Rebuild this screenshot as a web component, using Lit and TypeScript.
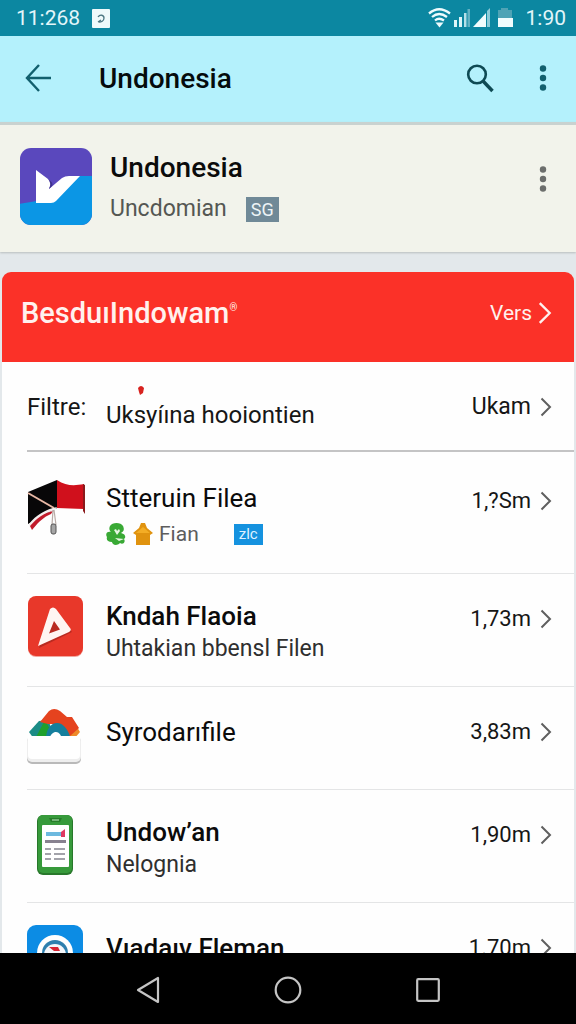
import { LitElement, html, css, nothing } from "lit";
import type { TemplateResult } from "lit";
import { customElement } from "lit/decorators.js";
import { classMap } from "lit/directives/class-map.js";

interface Entry {
  name: string;
  strong: boolean;
  detail?: string;
  tagged?: boolean;
  size: string;
  icon: TemplateResult;
}

const dots = html`<svg width="10" height="30" viewBox="0 0 10 30" aria-hidden="true">
  <circle cx="5" cy="5.500" r="3.200" /><circle cx="5" cy="15" r="3.200" /><circle cx="5" cy="24.500" r="3.200" />
</svg>`;

const chevron = html`<svg class="chevron" width="12" height="20" viewBox="0 0 12 20" aria-hidden="true">
  <path d="M1.5 1.5 10 10 1.5 18.5" fill="none" stroke="currentColor" stroke-width="2" />
</svg>`;

const flagIcon = html`<svg width="60" height="60" viewBox="1 0 60 60" aria-hidden="true">
  <path d="M31 3C40 9 48 9 58 7V32C48 32 40 31 31 31Z" fill="#d0101c" />
  <path d="M57 7V34l2 3V8Z" fill="#8b1a1c" />
  <path d="M2 15 31 3V31L27 33 2 47Z" fill="#080708" />
  <path d="M2 16 28 31" stroke="#e9b9a6" stroke-width="2" />
  <path d="M3 47C10 38 20 32 31 30L29 33C18 36 10 44 4 51Z" fill="#f4eeee" />
  <path d="M4 49C11 41 18 36 27 34L25 37C17 40 11 47 6 53Z" fill="#c21b2b" />
  <path d="M27 33 26 48M28 33 30 48" stroke="#b9aca7" stroke-width="1.2" fill="none" />
  <rect x="25" y="47" width="5" height="10" rx="2" fill="#a5a5a5" stroke="#555" />
</svg>`;

const playIcon = html`<svg width="60" height="62" viewBox="1 0 60 62" aria-hidden="true">
  <rect x="2" y="2" width="55" height="60" rx="8" fill="#f2a79f" />
  <rect x="2" y="1" width="55" height="60" rx="8" fill="#e8382a" />
  <path d="M27 15 46 37 13 53Z" fill="#b92a20" />
  <path fill-rule="evenodd" d="M24 14Q27 11 30 14L44 33Q46 35 43 37L12 51ZM28 26 23 38.500 34 34.500Z" fill="#fff5f2" />
</svg>`;

const boxIcon = html`<svg width="60" height="60" viewBox="1 1 60 60" aria-hidden="true">
  <path d="M3 25 13 14 22 13 30 32H8Z" fill="#1b8c86" />
  <path d="M9 32 19 13 27 28 24 32Z" fill="#1fa02c" />
  <path d="M40 32 51 20 54 25 48 32Z" fill="#ee8a2a" />
  <path d="M14 15 23 4Q28 0 34 4L41 10H46L53 21 44 29 34 17H22Z" fill="#e5431f" />
  <path d="M20 32C20 22 25 16 31 16S42 22 45 32Z" fill="#157f9d" />
  <path d="M23 32C25 27 27 25 30 25S35 28 36 32Z" fill="#fff" />
  <rect x="1" y="30" width="54" height="27" rx="5" fill="#b9b9b9" />
  <rect x="1" y="29" width="54" height="26" rx="5" fill="#eeeeee" />
  <path d="M2 29H54V48Q54 52 50 52H6Q2 52 2 48Z" fill="#fff" />
</svg>`;

const phoneIcon = html`<svg width="60" height="65" viewBox="0 -4 60 65" aria-hidden="true">
  <rect x="10" y="0" width="36" height="60" rx="6" fill="#28782b" />
  <rect x="11" y="0" width="34" height="58" rx="5" fill="#379a3b" />
  <path d="M22 3H35L33 7H24Z" fill="#277d2b" />
  <path d="M25 5H32" stroke="#8fc791" stroke-width="1.500" />
  <rect x="15" y="10" width="27" height="42" rx="1" fill="#fff" />
  <rect x="19" y="17" width="15" height="4" fill="#6db9df" />
  <path d="M34 17 38 14V22H34Z" fill="#df3a61" />
  <rect x="18" y="25" width="21" height="3" fill="#888290" />
  <path d="M18 34H24M27 34H38M18 39H24M27 39H38M18 44H24M27 44H38" stroke="#a3a3aa" stroke-width="2" />
</svg>`;

const circleIcon = html`<svg width="60" height="60" viewBox="1 0 60 60" aria-hidden="true">
  <rect x="1" y="1" width="56" height="58" rx="9" fill="#0c8ce4" />
  <circle cx="29" cy="29" r="18" fill="#fff" />
  <circle cx="29" cy="29" r="13" fill="#2e7fae" />
  <circle cx="29" cy="31" r="11" fill="#f4f6fa" />
  <path d="M23 23H32L34 27H28Z" fill="#d82331" />
</svg>`;

const entries: Entry[] = [
  { name: "Stteruin Filea", strong: false, detail: "Fian", tagged: true, size: "1,?Sm", icon: flagIcon },
  { name: "Kndah Flaoia", strong: true, detail: "Uhtakian bbensl Filen", size: "1,73m", icon: playIcon },
  { name: "Syrodarıfile", strong: false, size: "3,83m", icon: boxIcon },
  { name: "Undow’an", strong: true, detail: "Nelognia", size: "1,90m", icon: phoneIcon },
  { name: "Vıadaıv Fleman", strong: true, size: "1.70m", icon: circleIcon },
];

@customElement("app-root")
export class AppRoot extends LitElement {
  static styles = css`
    :host {
      display: flex;
      flex-direction: column;
      height: 100vh;
      overflow: hidden;
      background: #e3e8eb;
      color: #0b0b0b;
      font-family: Roboto, "Liberation Sans", sans-serif;
    }
    * { box-sizing: border-box; }
    svg { display: block; flex: none; }
    button {
      display: grid;
      place-items: center;
      padding: 0;
      border: 0;
      background: none;
      font: inherit;
      color: inherit;
      cursor: pointer;
    }
    a { color: inherit; text-decoration: none; }
    h1, h2, h3, p, ul { margin: 0; padding: 0; font-weight: 400; }
    ul { list-style: none; }

    .status {
      display: flex;
      flex: none;
      align-items: center;
      height: 36px;
      padding: 0 10px 0 16px;
      background: #0c87a1;
      color: #e2f6fa;
      font-size: 21px;
    }
    .status-note { margin-left: 12px; }
    .status-signals { margin-left: auto; margin-right: 12px; }

    .bar {
      display: flex;
      flex: none;
      align-items: center;
      height: 86px;
      padding: 0 15px 2px 20px;
      background: #b4f1fc;
      color: #12606e;
    }
    .bar button { width: 36px; height: 44px; }
    .bar-title {
      flex: 1;
      margin-left: 43px;
      color: #050b0c;
      font-size: 28px;
      font-weight: 500;
    }
    .bar .search { margin-right: 27px; color: #0e4a54; }
    .dots { fill: currentColor; }

    .summary {
      display: flex;
      flex: none;
      align-items: flex-start;
      height: 130px;
      padding: 22px 18px 0 19px;
      border-top: 3px solid #c9d2d0;
      background: #f2f3eb;
      box-shadow: 0 1px 2px #b9bdbd;
    }
    .summary-text { flex: 1; margin-left: 18px; }
    .summary-name { font-size: 28px; font-weight: 500; line-height: 42px; }
    .summary-detail {
      display: flex;
      align-items: center;
      gap: 19px;
      color: #555753;
      font-size: 23px;
      line-height: 40px;
    }
    .badge {
      padding: 0 5px;
      background: #708997;
      color: #edf4f6;
      font-size: 18px;
      line-height: 25px;
    }
    .summary button { width: 30px; height: 64px; color: #6c6e6c; }

    .card {
      flex: 1;
      min-height: 0;
      margin: 20px 2px 0;
      overflow-y: auto;
      scrollbar-width: none;
      border-radius: 9px 9px 0 0;
      background: #fefefe;
    }
    .banner {
      display: flex;
      align-items: center;
      height: 90px;
      padding: 0 22px 8px 19px;
      background: #fb3128;
      color: #fff1ee;
    }
    .banner-name { flex: 1; font-size: 29px; font-weight: 500; }
    .banner-mark { font-size: 10px; vertical-align: 12px; }
    .more {
      display: flex;
      align-items: center;
      gap: 6px;
      font-size: 21px;
    }
    .more svg { width: 14px; height: 26px; }

    .row {
      display: flex;
      align-items: flex-start;
      margin-left: 25px;
      padding: 21px 22px 21px 0;
      border-bottom: 1px solid #e4e5e6;
      color: #161616;
    }
    .filter {
      padding: 28px 22px 26px 0;
      border-bottom: 2px solid #c4c4c5;
      line-height: 34px;
    }
    .filter-label { width: 79px; font-size: 24px; }
    .filter-value { position: relative; flex: 1; font-size: 24px; padding-top: 8px; margin-bottom: -8px; }
    .filter-alert {
      position: absolute;
      top: -4px;
      left: 32px;
      width: 6px;
      height: 9px;
    }
    .tagged { padding: 25px 22px 20px 0; }
    .row-text { flex: 1; margin-left: 19px; padding-top: 4px; color: #0b0b0b; }
    .solo .row-text { padding-top: 7px; }
    .row-name { font-size: 26px; line-height: 34px; }
    .strong { font-weight: 500; }
    .row-detail {
      display: flex;
      align-items: center;
      color: #2f2f2f;
      font-size: 23px;
      line-height: 32px;
    }
    .tagged .row-detail { gap: 5px; line-height: 38px; color: #5d5d5d; font-size: 21px; }
    .tagged .row-detail .tag {
      margin-left: 30px;
      padding: 0 5px;
      background: #1592df;
      color: #dff2ff;
      font-size: 15px;
      line-height: 21px;
    }
    .row-size {
      display: flex;
      align-items: center;
      gap: 9px;
      padding-top: 7px;
      font-size: 22px;
      line-height: 34px;
    }
    .filter .row-size { padding-top: 0; font-size: 23px; }
    .chevron { color: #5f5f5f; }
    .more .chevron { color: inherit; }

    .nav {
      display: flex;
      flex: none;
      justify-content: center;
      align-items: center;
      gap: 96px;
      height: 71px;
      padding-top: 2px;
      background: #000;
      color: #c4c4c4;
    }
    .nav button { width: 44px; height: 44px; }
  `;

  private renderEntry(entry: Entry) {
    return html`<li>
      <a href="#" class=${classMap({ row: true, tagged: !!entry.tagged, solo: !entry.detail })}>
        ${entry.icon}
        <div class="row-text">
          <h3 class=${classMap({ "row-name": true, strong: entry.strong })}>${entry.name}</h3>
          ${entry.detail
            ? html`<p class="row-detail">
                ${entry.tagged
                  ? html`<svg width="21" height="24" viewBox="0 0 21 24" aria-hidden="true">
                        <path d="M4 4C6 0 15 0 17 4C19 8 17 10 15 11C20 12 20 16 18 17C20 20 17 23 14 21C10 25 6 22 6 20C2 20 0 18 1 15C-1 12 1 9 5 10C3 8 3 6 4 4Z" fill="#39a935" />
                        <path d="M8 8 10 7 11 9 13 7 14 9 11 13ZM9 16 18 17 13 19Z" fill="#e8f6e4" />
                      </svg>
                      <svg width="22" height="24" viewBox="0 0 22 24" aria-hidden="true">
                        <path d="M1 11 7 6 9 1H13L15 6 21 11 18 13V23H4V13Z" fill="#e0930f" />
                        <path d="M4 11 11 5 18 11Z" fill="#f3ad25" />
                      </svg>`
                  : nothing}
                <span>${entry.detail}</span>
                ${entry.tagged ? html`<span class="tag">zlc</span>` : nothing}
              </p>`
            : nothing}
        </div>
        <div class="row-size"><span>${entry.size}</span>${chevron}</div>
      </a>
    </li>`;
  }

  render() {
    return html`
      <div class="status">
        <span>11:268</span>
        <svg class="status-note" width="18" height="19" viewBox="0 0 18 19" aria-hidden="true">
          <rect width="18" height="19" rx="1" fill="#effafb" />
          <path d="M6 8C8 5 12 6 12 9S9 13 7 13M6 13 9 11" fill="none" stroke="#4b7580" stroke-width="1.300" />
        </svg>
        <svg class="status-signals" width="86" height="22" viewBox="0 0 86 22" aria-hidden="true">
          <g fill="none" stroke="#eefbfd" stroke-width="2.300">
            <path d="M1 6.500Q11 -2 22 6.500M4 10Q11 4 19 10M7 13.500Q11 10 16 13.500" />
          </g>
          <path d="M7.500 15.500H15.500L11.500 20.500Z" fill="#eefbfd" />
          <path d="M26 13H29V20H26ZM31 10H34V20H31Z" fill="#dff5f8" />
          <path d="M36 6H38.500V20H36Z" fill="#b5e0e8" />
          <path d="M39.500 2H42V20H39.500Z" fill="#62b2c3" />
          <path d="M45 20 58 6V20Z" fill="#f1fcfd" />
          <path d="M59 4 62 1V20H59Z" fill="#8dcbd8" />
          <path d="M73 1H80V3H84V11H70V3H73Z" fill="#4fa3b5" />
          <path d="M70 11H85V20H70Z" fill="#f1fcfd" />
        </svg>
        <span>1:90</span>
      </div>

      <header class="bar">
        <button aria-label="Back">
          <svg width="26" height="30" viewBox="0 0 26 30" aria-hidden="true">
            <path d="M14 2 2 15 14 28M2 15H26" fill="none" stroke="currentColor" stroke-width="2.400" />
          </svg>
        </button>
        <h1 class="bar-title">Undonesia</h1>
        <button class="search" aria-label="Search">
          <svg width="28" height="30" viewBox="0 0 28 30" aria-hidden="true">
            <circle cx="11" cy="11.500" r="8.800" fill="none" stroke="currentColor" stroke-width="2.600" />
            <path d="M17 18 26.500 28" stroke="currentColor" stroke-width="3.400" />
          </svg>
        </button>
        <button class="dots" aria-label="Menu">${dots}</button>
      </header>

      <section class="summary">
        <svg width="73" height="78" viewBox="0 0 73 78" aria-hidden="true">
          <defs>
            <clipPath id="tile"><rect x="1" y="1" width="72" height="77" rx="11" /></clipPath>
          </defs>
          <g clip-path="url(#tile)">
            <rect width="73" height="78" fill="#5a48bd" />
            <path d="M0 57 18 54 50 29H73V78H0Z" fill="#0b96e5" />
          </g>
          <path d="M17 23 29 32Q33 36 30 42L43 31Q46 29 50 29H61L37 54Q35 56 32 56H17Z" fill="#fff" />
          <path d="M29 32Q35 36 33 39L30 42Q33 36 29 32Z" fill="#3f328e" />
        </svg>
        <div class="summary-text">
          <h2 class="summary-name">Undonesia</h2>
          <p class="summary-detail"><span>Uncdomian</span><span class="badge">SG</span></p>
        </div>
        <button class="dots" aria-label="App options">${dots}</button>
      </section>

      <main class="card">
        <div class="banner">
          <h2 class="banner-name">BesduıIndowam<span class="banner-mark">®</span></h2>
          <a href="#" class="more"><span>Vers</span>${chevron}</a>
        </div>
        <a href="#" class="row filter">
          <span class="filter-label">Filtre:</span>
          <span class="filter-value">Uksyíına hooiontien
            <svg class="filter-alert" viewBox="0 0 6 9" aria-hidden="true">
              <path d="M0 2Q3 -2 6 2L5 7 2 9 1 6Z" fill="#d8231f" />
            </svg>
          </span>
          <span class="row-size"><span>Ukam</span>${chevron}</span>
        </a>
        <ul>${entries.map((entry) => this.renderEntry(entry))}</ul>
      </main>

      <nav class="nav">
        <button aria-label="Back">
          <svg width="24" height="28" viewBox="0 0 24 28" aria-hidden="true">
            <path d="M22 2V26L2 14Z" fill="none" stroke="currentColor" stroke-width="2.200" stroke-linejoin="round" />
          </svg>
        </button>
        <button aria-label="Home">
          <svg width="28" height="28" viewBox="0 0 28 28" aria-hidden="true">
            <circle cx="14" cy="14" r="12.300" fill="none" stroke="currentColor" stroke-width="2.200" />
          </svg>
        </button>
        <button aria-label="Recent apps">
          <svg width="24" height="24" viewBox="0 0 24 24" aria-hidden="true">
            <rect x="1.200" y="1.200" width="21.600" height="21.600" rx="1" fill="none" stroke="currentColor" stroke-width="2.200" />
          </svg>
        </button>
      </nav>
    `;
  }
}
